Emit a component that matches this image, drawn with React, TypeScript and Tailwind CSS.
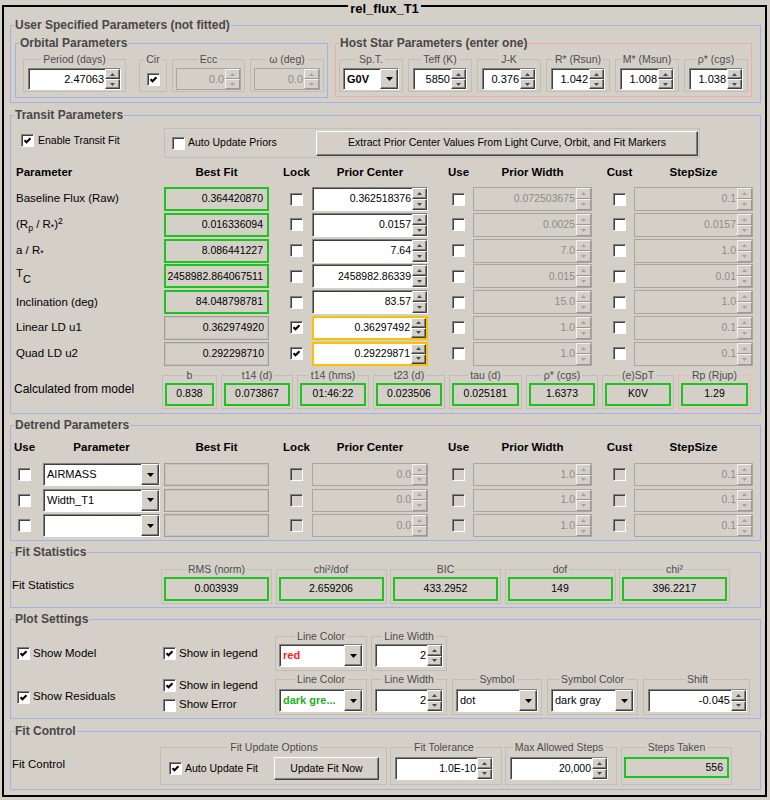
import type { ReactNode } from "react";

const FONT = "font-['Liberation_Sans',Arial,sans-serif]";
const RAISED =
  "border border-t-white border-l-white border-b-[#404040] border-r-[#404040] bg-[#d4d0c8] shadow-[inset_-1px_-1px_0_#808080]";
const SUNKEN = "border border-t-[#808080] border-l-[#808080] border-b-white border-r-white";

function Arrow({ up, dim }: { up?: boolean; dim?: boolean }) {
  return (
    <svg width="5" height="3" viewBox="0 0 5 3" className="block">
      <path d={up ? "M0 3L2.5 0L5 3Z" : "M0 0H5L2.5 3Z"} fill={dim ? "#a6a39e" : "#4a4a4a"} />
    </svg>
  );
}

function SpinButtons({ dim }: { dim?: boolean }) {
  const btn = dim
    ? "flex flex-1 items-center justify-center border border-t-[#f4f2ee] border-l-[#f4f2ee] border-b-[#9a9792] border-r-[#9a9792] bg-[#d4d0c8]"
    : `flex flex-1 items-center justify-center ${RAISED}`;
  return (
    <div className="flex w-[15px] shrink-0 flex-col">
      <div className={btn}>
        <Arrow up dim={dim} />
      </div>
      <div className={btn}>
        <Arrow dim={dim} />
      </div>
    </div>
  );
}

function Spinner({
  value,
  className = "",
  disabled,
  orange,
  text = "text-[10.5px]",
}: {
  value: string;
  className?: string;
  disabled?: boolean;
  orange?: boolean;
  text?: string;
}) {
  const frame = orange ? "border-2 border-[#ffc000]" : disabled ? "border border-[#a9a6a0]" : SUNKEN;
  const field = disabled
    ? "bg-[#d4d0c8] text-[#8f8c87]"
    : orange
      ? "bg-white text-black"
      : "bg-white text-black shadow-[inset_1px_1px_0_#404040]";
  return (
    <div className={`flex shrink-0 ${frame} ${className}`}>
      <div className={`flex min-w-0 flex-1 items-center justify-end pr-[1px] ${field} ${text}`}>{value}</div>
      <SpinButtons dim={disabled} />
    </div>
  );
}

function Check({ checked, disabled }: { checked?: boolean; disabled?: boolean }) {
  return (
    <div className={`h-[13px] w-[13px] shrink-0 ${SUNKEN}`}>
      <div
        className={`flex h-full w-full items-center justify-center shadow-[inset_1px_1px_0_#404040] ${
          disabled ? "bg-[#d4d0c8]" : "bg-white"
        }`}
      >
        {checked && (
          <svg width="9" height="9" viewBox="0 0 9 9" className="block">
            <path d="M1.5 4.2L3.5 6.3L7.5 2.2" stroke="#000" strokeWidth="2" fill="none" />
          </svg>
        )}
      </div>
    </div>
  );
}

function Combo({
  text,
  className = "",
  textClass = "text-black",
}: {
  text: string;
  className?: string;
  textClass?: string;
}) {
  return (
    <div className={`flex shrink-0 ${SUNKEN} ${className}`}>
      <div
        className={`flex min-w-0 flex-1 items-center overflow-hidden whitespace-nowrap bg-white pl-[3px] shadow-[inset_1px_1px_0_#404040] text-[11px] ${textClass}`}
      >
        {text}
      </div>
      <div className={`flex w-[18px] shrink-0 items-center justify-center ${RAISED}`}>
        <svg width="7" height="4" viewBox="0 0 7 4" className="block">
          <path d="M0 0H7L3.5 4Z" fill="#000" />
        </svg>
      </div>
    </div>
  );
}

function Field({
  value = "",
  className = "",
  green,
  center,
}: {
  value?: string;
  className?: string;
  green?: boolean;
  center?: boolean;
}) {
  const frame = green ? "border-2 border-[#1ec41e]" : "border border-[#a19e98] shadow-[inset_0_0_0_1px_#c6c3bd]";
  return (
    <div
      className={`flex shrink-0 items-center text-[10.5px] ${center ? "justify-center" : "justify-end pr-[4px]"} ${frame} ${className}`}
    >
      {value}
    </div>
  );
}

function Button({ children, className = "" }: { children: ReactNode; className?: string }) {
  return (
    <div className={`flex shrink-0 items-center justify-center text-[10.5px] ${RAISED} ${className}`}>{children}</div>
  );
}

function TBox({
  title,
  className = "",
  border = "border-[#c2beb6]",
  children,
}: {
  title: string;
  className?: string;
  border?: string;
  children?: ReactNode;
}) {
  return (
    <div className={`flex shrink-0 flex-col border ${border} ${className}`}>
      <div className="-mt-[7px] flex h-[13px] justify-center">
        <span className="whitespace-nowrap bg-[#d4d0c8] px-[2px] text-[10.5px] leading-[13px] text-[#4d4d4d]">
          {title}
        </span>
      </div>
      {children}
    </div>
  );
}

function Group({
  title,
  className = "",
  border = "border-[#a3b1ea]",
  children,
}: {
  title: string;
  className?: string;
  border?: string;
  children?: ReactNode;
}) {
  return (
    <div className={`flex shrink-0 flex-col border ${border} ${className}`}>
      <div className="-mt-[8px] flex h-[15px]">
        <span className="ml-[3px] whitespace-nowrap bg-[#d4d0c8] px-[1px] text-[12px] font-bold leading-[15px] text-[#474747]">
          {title}
        </span>
      </div>
      {children}
    </div>
  );
}

function Head({ children, className = "" }: { children: ReactNode; className?: string }) {
  return (
    <div className={`flex shrink-0 justify-center whitespace-nowrap ${className}`}>
      <span>{children}</span>
    </div>
  );
}

type TransitRow = {
  label: ReactNode;
  best: string;
  green: boolean;
  lock: boolean;
  prior: string;
  width: string;
  step: string;
};

const transitRows: TransitRow[] = [
  { label: "Baseline Flux (Raw)", best: "0.364420870", green: true, lock: false, prior: "0.362518376", width: "0.072503675", step: "0.1" },
  {
    label: (
      <>
        (R<sub className="bottom-[-0.35em]">p</sub> / R<sub>*</sub>)<sup>2</sup>
      </>
    ),
    best: "0.016336094",
    green: true,
    lock: false,
    prior: "0.0157",
    width: "0.0025",
    step: "0.0157",
  },
  {
    label: (
      <>
        a / R<sub>*</sub>
      </>
    ),
    best: "8.086441227",
    green: true,
    lock: false,
    prior: "7.64",
    width: "7.0",
    step: "1.0",
  },
  {
    label: (
      <>
        <span className="relative top-[-3px]">T</span>
        <sub className="bottom-[-0.3em] text-[11px]">C</sub>
      </>
    ),
    best: "2458982.864067511",
    green: true,
    lock: false,
    prior: "2458982.86339",
    width: "0.015",
    step: "0.01",
  },
  { label: "Inclination (deg)", best: "84.048798781", green: true, lock: false, prior: "83.57", width: "15.0", step: "1.0" },
  { label: "Linear LD u1", best: "0.362974920", green: false, lock: true, prior: "0.36297492", width: "1.0", step: "0.1" },
  { label: "Quad LD u2", best: "0.292298710", green: false, lock: true, prior: "0.29229871", width: "1.0", step: "0.1" },
];

const calcBoxes = [
  { t: "b", v: "0.838", w: "w-[55px]" },
  { t: "t14 (d)", v: "0.073867", w: "w-[72px]" },
  { t: "t14 (hms)", v: "01:46:22", w: "w-[72px]" },
  { t: "t23 (d)", v: "0.023506", w: "w-[72px]" },
  { t: "tau (d)", v: "0.025181", w: "w-[73px]" },
  { t: "ρ* (cgs)", v: "1.6373", w: "w-[72px]" },
  { t: "(e)SpT", v: "K0V", w: "w-[72px]" },
  { t: "Rp (Rjup)", v: "1.29", w: "w-[73px]", pink: true },
];

const stats = [
  { t: "RMS (norm)", v: "0.003939" },
  { t: "chi²/dof", v: "2.659206" },
  { t: "BIC", v: "433.2952" },
  { t: "dof", v: "149" },
  { t: "chi²", v: "396.2217" },
];

const hostBoxes = [
  { t: "Teff (K)", v: "5850" },
  { t: "J-K", v: "0.376" },
  { t: "R* (Rsun)", v: "1.042" },
  { t: "M* (Msun)", v: "1.008" },
  { t: "ρ* (cgs)", v: "1.038" },
];

function TableHeader({ first }: { first: ReactNode }) {
  return (
    <div className="mt-[5px] flex h-[20px] shrink-0 items-center text-[11.5px] font-bold">
      {first}
      <Head className="w-[105px]">Best Fit</Head>
      <Head className="ml-[21px] w-[13px]">Lock</Head>
      <Head className="ml-[9px] w-[116px]">Prior Center</Head>
      <Head className="ml-[24px] w-[13px]">Use</Head>
      <Head className="ml-[8px] w-[119px]">Prior Width</Head>
      <Head className="ml-[21px] w-[13px]">Cust</Head>
      <Head className="ml-[8px] w-[119px]">StepSize</Head>
    </div>
  );
}

function UserSpecified() {
  return (
    <Group title="User Specified Parameters (not fitted)" className="mt-[8px] h-[78px]">
      <div className="mt-[10px] flex items-start pl-[4px]">
        <Group title="Orbital Parameters" className="h-[55px] w-[313px]">
          <div className="mt-[8px] flex pl-[7px]">
            <TBox title="Period (days)" className="h-[33px] w-[103px] px-[4px]">
              <Spinner value="2.47063" className="mt-[2px] h-[22px]" text="text-[11px]" />
            </TBox>
            <TBox title="Cir" className="ml-[13px] h-[33px] w-[28px] items-center">
              <div className="mt-[7px]">
                <Check checked />
              </div>
            </TBox>
            <TBox title="Ecc" className="ml-[5px] h-[33px] w-[73px] px-[3px]">
              <Spinner value="0.0" disabled className="mt-[2px] h-[22px]" text="text-[11px]" />
            </TBox>
            <TBox title="ω (deg)" className="ml-[5px] h-[33px] w-[74px] px-[3px]">
              <Spinner value="0.0" disabled className="mt-[2px] h-[22px]" text="text-[11px]" />
            </TBox>
          </div>
        </Group>
        <Group
          title="Host Star Parameters (enter one)"
          border="border-[#f2aaaa]"
          className="ml-[7px] h-[54px] w-[417px]"
        >
          <div className="mt-[8px] flex gap-[5px] pl-[3px]">
            <TBox title="Sp.T." className="h-[33px] w-[64px] px-[3px]">
              <Combo text="G0V" textClass="font-bold text-black" className="mt-[2px] h-[22px]" />
            </TBox>
            {hostBoxes.map((b) => (
              <TBox key={b.t} title={b.t} className="h-[33px] w-[64px] px-[4px]">
                <Spinner value={b.v} className="mt-[2px] h-[22px]" text="text-[11px]" />
              </TBox>
            ))}
          </div>
        </Group>
      </div>
    </Group>
  );
}

function TransitParameters() {
  return (
    <Group title="Transit Parameters" className="mt-[12px] h-[299px]">
      <div className="mt-[5px] flex items-start">
        <div className="flex w-[153px] shrink-0 items-center pl-[10px] pt-[5px]">
          <Check checked />
          <span className="ml-[4px] text-[10.5px]">Enable Transit Fit</span>
        </div>
        <div className="flex h-[30px] w-[536px] items-center border border-[#c2beb6] pl-[7px] pr-[1px]">
          <Check />
          <span className="ml-[3px] text-[10.5px]">Auto Update Priors</span>
          <Button className="ml-auto h-[25px] w-[382px]">
            Extract Prior Center Values From Light Curve, Orbit, and Fit Markers
          </Button>
        </div>
      </div>

      <TableHeader first={<div className="w-[153px] shrink-0 pl-[5px]">Parameter</div>} />

      <div className="mt-[4px] flex flex-col gap-[1.8px]">
        {transitRows.map((r, i) => (
          <div key={i} className="flex h-[24px] items-center">
            <div className="w-[153px] shrink-0 whitespace-nowrap pl-[5px] text-[11.5px]">{r.label}</div>
            <Field value={r.best} green={r.green} className="h-[24px] w-[105px]" />
            <div className="ml-[21px]">
              <Check checked={r.lock} />
            </div>
            <Spinner value={r.prior} orange={r.lock} className="ml-[9px] h-[24px] w-[116px]" />
            <div className="ml-[24px]">
              <Check />
            </div>
            <Spinner value={r.width} disabled className="ml-[8px] h-[24px] w-[119px]" />
            <div className="ml-[21px]">
              <Check />
            </div>
            <Spinner value={r.step} disabled className="ml-[8px] h-[24px] w-[119px]" />
          </div>
        ))}
      </div>

      <div className="mt-[9px] flex items-start">
        <div className="mt-[7px] w-[151px] shrink-0 whitespace-nowrap pl-[3px] text-[12px] leading-[14px]">
          Calculated from model
        </div>
        <div className="flex gap-[4px]">
          {calcBoxes.map((c) => (
            <TBox
              key={c.t}
              title={c.t}
              border={c.pink ? "border-[#f3b6b6]" : "border-[#c2beb6]"}
              className={`h-[34px] px-[2px] ${c.w}`}
            >
              <Field value={c.v} green center className="mt-[1px] h-[23px]" />
            </TBox>
          ))}
        </div>
      </div>
    </Group>
  );
}

function DetrendParameters() {
  const rows = ["AIRMASS", "Width_T1", ""];
  return (
    <Group title="Detrend Parameters" className="mt-[11px] h-[116px]">
      <TableHeader
        first={
          <>
            <Head className="ml-[7px] w-[13px]">Use</Head>
            <Head className="ml-[12px] w-[117px]">Parameter</Head>
            <div className="w-[4px] shrink-0" />
          </>
        }
      />
      <div className="mt-[5px] flex flex-col gap-[2.7px]">
        {rows.map((p, i) => (
          <div key={i} className="flex h-[23px] items-center">
            <div className="ml-[7px]">
              <Check />
            </div>
            <Combo text={p} className="ml-[12px] h-[23px] w-[117px]" />
            <Field className="ml-[4px] h-[23px] w-[105px]" />
            <div className="ml-[21px]">
              <Check disabled />
            </div>
            <Spinner value="0.0" disabled className="ml-[9px] h-[23px] w-[116px]" />
            <div className="ml-[24px]">
              <Check disabled />
            </div>
            <Spinner value="1.0" disabled className="ml-[8px] h-[23px] w-[119px]" />
            <div className="ml-[21px]">
              <Check disabled />
            </div>
            <Spinner value="0.1" disabled className="ml-[8px] h-[23px] w-[119px]" />
          </div>
        ))}
      </div>
    </Group>
  );
}

function FitStatistics() {
  return (
    <Group title="Fit Statistics" className="mt-[11px] h-[56px]">
      <div className="mt-[9px] flex items-start">
        <div className="mt-[9px] w-[150px] shrink-0 pl-[1px] text-[11.5px] leading-[14px]">Fit Statistics</div>
        <div className="flex gap-[3.5px]">
          {stats.map((s) => (
            <TBox key={s.t} title={s.t} className="h-[35px] w-[111px] px-[2px]">
              <Field value={s.v} green center className="mt-[1px] h-[24px]" />
            </TBox>
          ))}
        </div>
      </div>
    </Group>
  );
}

function PlotSettings() {
  return (
    <Group title="Plot Settings" className="mt-[11px] h-[100px]">
      <div className="mt-[9px] flex h-[35px] items-center text-[11.5px]">
        <div className="flex w-[152px] shrink-0 items-center pl-[6px]">
          <Check checked />
          <span className="ml-[3px]">Show Model</span>
        </div>
        <div className="flex w-[112px] shrink-0 items-center">
          <Check checked />
          <span className="ml-[3px]">Show in legend</span>
        </div>
        <TBox title="Line Color" className="h-[35px] w-[92px] px-[3px]">
          <Combo text="red" textClass="font-bold text-[#ff1a1a]" className="mt-[1px] h-[23px]" />
        </TBox>
        <TBox title="Line Width" className="ml-[4px] h-[35px] w-[76px] px-[3px]">
          <Spinner value="2" className="mt-[1px] h-[23px]" text="text-[11px]" />
        </TBox>
      </div>

      <div className="mt-[8px] flex h-[36px] items-center text-[11.5px]">
        <div className="flex w-[152px] shrink-0 items-center pl-[6px]">
          <Check checked />
          <span className="ml-[3px]">Show Residuals</span>
        </div>
        <div className="flex w-[112px] shrink-0 flex-col gap-[6.5px] self-start">
          <div className="flex h-[13px] items-center">
            <Check checked />
            <span className="ml-[3px]">Show in legend</span>
          </div>
          <div className="flex h-[13px] items-center">
            <Check />
            <span className="ml-[3px]">Show Error</span>
          </div>
        </div>
        <TBox title="Line Color" className="h-[36px] w-[92px] px-[3px]">
          <Combo text="dark gre..." textClass="font-bold text-[#1fae1f]" className="mt-[3px] h-[23px]" />
        </TBox>
        <TBox title="Line Width" className="ml-[4px] h-[36px] w-[76px] px-[3px]">
          <Spinner value="2" className="mt-[3px] h-[23px]" text="text-[11px]" />
        </TBox>
        <TBox title="Symbol" className="ml-[5px] h-[36px] w-[90px] px-[3px]">
          <Combo text="dot" className="mt-[3px] h-[23px]" />
        </TBox>
        <TBox title="Symbol Color" className="ml-[5px] h-[36px] w-[91px] px-[3px]">
          <Combo text="dark gray" className="mt-[3px] h-[23px]" />
        </TBox>
        <TBox title="Shift" className="ml-[5px] h-[36px] w-[107px] pl-[4px] pr-[2px]">
          <Spinner value="-0.045" className="mt-[3px] h-[23px]" text="text-[11px]" />
        </TBox>
      </div>
    </Group>
  );
}

function FitControl() {
  return (
    <Group title="Fit Control" className="mt-[12px] h-[59px]">
      <div className="mt-[8px] flex items-start">
        <div className="mt-[10px] w-[149px] shrink-0 pl-[1px] text-[11.5px] leading-[14px]">Fit Control</div>
        <TBox title="Fit Update Options" className="h-[38px] w-[227px] pl-[8px] pr-[7px]">
          <div className="mt-[3px] flex h-[23px] items-center">
            <Check checked />
            <span className="ml-[3px] text-[10.5px]">Auto Update Fit</span>
            <Button className="ml-auto h-[23px] w-[105px]">Update Fit Now</Button>
          </div>
        </TBox>
        <TBox title="Fit Tolerance" className="ml-[3px] h-[38px] w-[112px] pl-[4px] pr-[8px]">
          <Spinner value="1.0E-10" className="mt-[3px] h-[23px]" />
        </TBox>
        <TBox title="Max Allowed Steps" className="ml-[3px] h-[38px] w-[112px] pl-[4px] pr-[8px]">
          <Spinner value="20,000" className="mt-[3px] h-[23px]" />
        </TBox>
        <TBox title="Steps Taken" className="ml-[4px] h-[38px] w-[111px] px-[2px]">
          <Field value="556" green className="mt-[3px] h-[21px]" />
        </TBox>
      </div>
    </Group>
  );
}

export default function App() {
  return (
    <div className={`h-[800px] w-[770px] bg-[#d4d0c8] pl-[2px] pt-[5px] text-black ${FONT}`}>
      <div className="flex h-[792px] w-[765px] flex-col border-2 border-black">
        <div className="-mt-[6px] flex h-[16px] justify-center">
          <span className="bg-[#d4d0c8] px-[2px] text-[13px] font-bold leading-[16px]">rel_flux_T1</span>
        </div>
        <div className="flex w-[757px] flex-col pl-[6px]">
          <UserSpecified />
          <TransitParameters />
          <DetrendParameters />
          <FitStatistics />
          <PlotSettings />
          <FitControl />
        </div>
      </div>
    </div>
  );
}
